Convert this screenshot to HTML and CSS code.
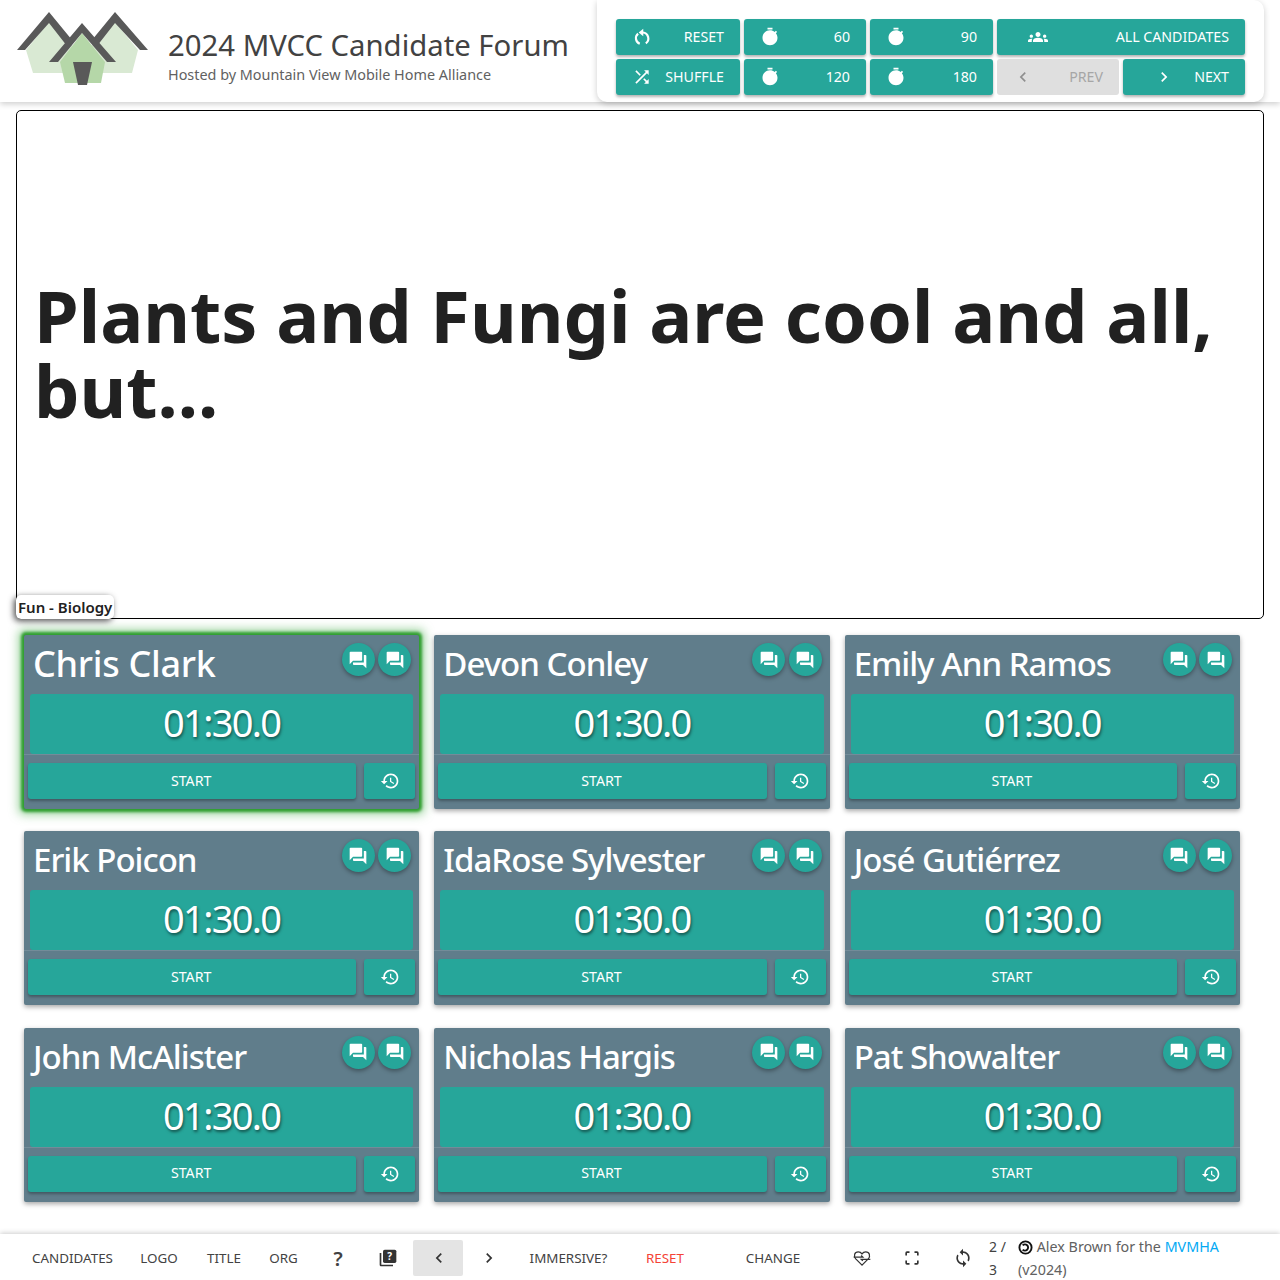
FILE: index.html
```html
<!DOCTYPE html>
<html lang="en">
<head>
  <meta charset="UTF-8" />
  <title>2024 MVCC Candidate Forum</title>
  <link rel="stylesheet" href="styles.css">
</head>
<body>

  <svg class="defs" width="0" height="0">
    <symbol id="i-forum" viewBox="0 0 24 24"><path d="M21 6h-2v9H6v2c0 .55.45 1 1 1h11l4 4V7c0-.55-.45-1-1-1zm-4 6V3c0-.55-.45-1-1-1H3c-.55 0-1 .45-1 1v14l4-4h10c.55 0 1-.45 1-1z"/></symbol>
    <symbol id="i-history" viewBox="0 0 24 24"><path d="M13 3c-4.97 0-9 4.03-9 9H1l3.89 3.89.07.14L9 12H6c0-3.87 3.13-7 7-7s7 3.13 7 7-3.13 7-7 7c-1.93 0-3.68-.79-4.94-2.06l-1.42 1.42C8.27 19.99 10.51 21 13 21c4.97 0 9-4.03 9-9s-4.03-9-9-9zm-1 5v5l4.28 2.54.72-1.21-3.5-2.08V8H12z"/></symbol>
    <symbol id="i-timer" viewBox="0 0 24 24"><path d="M15 1H9v2h6V1zm-4 13h2V8h-2v6zm8.03-6.61l1.42-1.42c-.43-.51-.9-.99-1.41-1.41l-1.42 1.42C16.07 4.74 14.12 4 12 4c-4.97 0-9 4.03-9 9s4.02 9 9 9 9-4.03 9-9c0-2.12-.74-4.07-1.97-5.61z"/></symbol>
    <symbol id="i-shuffle" viewBox="0 0 24 24"><path d="M10.59 9.17L5.41 4 4 5.41l5.17 5.17 1.42-1.41zM14.5 4l2.04 2.04L4 18.59 5.41 20 17.96 7.46 20 9.5V4h-5.5zm.33 9.41l-1.41 1.41 3.13 3.13L14.5 20H20v-5.5l-2.04 2.04-3.13-3.13z"/></symbol>
    <symbol id="i-groups" viewBox="0 0 24 24"><path d="M12 12.75c1.63 0 3.07.39 4.24.9 1.08.48 1.76 1.56 1.76 2.73V18H6v-1.61c0-1.18.68-2.26 1.76-2.73 1.17-.52 2.61-.91 4.24-.91zM4 13c1.1 0 2-.9 2-2s-.9-2-2-2-2 .9-2 2 .9 2 2 2zm1.13 1.1c-.37-.06-.74-.1-1.13-.1-.99 0-1.93.21-2.78.58C.48 14.9 0 15.62 0 16.43V18h4.5v-1.61c0-.83.23-1.61.63-2.29zM20 13c1.1 0 2-.9 2-2s-.9-2-2-2-2 .9-2 2 .9 2 2 2zm4 3.43c0-.81-.48-1.53-1.22-1.85-.85-.37-1.79-.58-2.78-.58-.39 0-.76.04-1.13.1.4.68.63 1.46.63 2.29V18H24v-1.57zM12 6c1.66 0 3 1.34 3 3s-1.34 3-3 3-3-1.34-3-3 1.34-3 3-3z"/></symbol>
    <symbol id="i-reset" viewBox="0 0 24 24"><path class="ring" d="M13 6.600a7.200 7.200 0 0 1 3.600 13M9.300 20.200A7.200 7.200 0 0 1 7.300 8"/><path d="M13.500 2v9L8 6.500z"/></symbol>
    <symbol id="i-prev" viewBox="0 0 24 24"><path d="M15.41 7.41L14 6l-6 6 6 6 1.41-1.41L10.83 12z"/></symbol>
    <symbol id="i-next" viewBox="0 0 24 24"><path d="M10 6L8.59 7.41 13.17 12l-4.58 4.58L10 18l6-6z"/></symbol>
    <symbol id="i-sync" viewBox="0 0 24 24"><path d="M12 4V1L8 5l4 4V6c3.31 0 6 2.69 6 6 0 1.01-.25 1.97-.7 2.8l1.46 1.46C19.54 15.03 20 13.57 20 12c0-4.42-3.58-8-8-8zm0 14c-3.31 0-6-2.69-6-6 0-1.01.25-1.97.7-2.8L5.24 7.74C4.46 8.97 4 10.43 4 12c0 4.42 3.58 8 8 8v3l4-4-4-4v3z"/></symbol>
  </svg>

  <header class="topbar">
    <div class="brand">
      <svg class="logo" viewBox="16 10 134 76">
        <polygon class="house-light" points="49,22 26,50 33,73 132,73 138,50 115,22 82,55"/>
        <polygon class="house-mid" points="82,33 60,62 65,83 101,83 105,62"/>
        <polygon class="roof" points="49,12 72,40 67,46 49,23 25,50 17,50"/>
        <polygon class="roof" points="115,12 148,50 140,50 115,23 97,46 92,40"/>
        <polygon class="roof" points="82,23 116,62 107,62 82,33 58,62 49,62"/>
        <polygon class="roof" points="73,62 92,62 87,85 78,85"/>
      </svg>
      <div class="brand-text">
        <div class="brand-title">2024 MVCC Candidate Forum</div>
        <div class="brand-sub">Hosted by Mountain View Mobile Home Alliance</div>
      </div>
    </div>

    <div class="controls">
      <button class="btn"><svg class="ico"><use href="#i-reset"/></svg>Reset</button>
      <button class="btn"><svg class="ico"><use href="#i-timer"/></svg>60</button>
      <button class="btn"><svg class="ico"><use href="#i-timer"/></svg>90</button>
      <button class="btn wide shift"><svg class="ico"><use href="#i-groups"/></svg>All Candidates</button>
      <button class="btn"><svg class="ico"><use href="#i-shuffle"/></svg>Shuffle</button>
      <button class="btn"><svg class="ico"><use href="#i-timer"/></svg>120</button>
      <button class="btn"><svg class="ico"><use href="#i-timer"/></svg>180</button>
      <button class="btn disabled"><svg class="ico"><use href="#i-prev"/></svg>Prev</button>
      <button class="btn shift"><svg class="ico"><use href="#i-next"/></svg>Next</button>
    </div>
  </header>

  <section class="question">
    <h1>Plants and Fungi are cool and all, but...</h1>
    <span class="tag">Fun - Biology</span>
  </section>

  <main class="cards">
    <div class="card active">
      <div class="card-head"><span class="name">Chris Clark</span><span class="round"><svg class="ico"><use href="#i-forum"/></svg></span><span class="round"><svg class="ico"><use href="#i-forum"/></svg></span></div>
      <div class="clock">01:30.0</div>
      <div class="actions"><button class="btn start">Start</button><button class="btn back"><svg class="ico"><use href="#i-history"/></svg></button></div>
    </div>
    <div class="card">
      <div class="card-head"><span class="name">Devon Conley</span><span class="round"><svg class="ico"><use href="#i-forum"/></svg></span><span class="round"><svg class="ico"><use href="#i-forum"/></svg></span></div>
      <div class="clock">01:30.0</div>
      <div class="actions"><button class="btn start">Start</button><button class="btn back"><svg class="ico"><use href="#i-history"/></svg></button></div>
    </div>
    <div class="card">
      <div class="card-head"><span class="name">Emily Ann Ramos</span><span class="round"><svg class="ico"><use href="#i-forum"/></svg></span><span class="round"><svg class="ico"><use href="#i-forum"/></svg></span></div>
      <div class="clock">01:30.0</div>
      <div class="actions"><button class="btn start">Start</button><button class="btn back"><svg class="ico"><use href="#i-history"/></svg></button></div>
    </div>
    <div class="card">
      <div class="card-head"><span class="name">Erik Poicon</span><span class="round"><svg class="ico"><use href="#i-forum"/></svg></span><span class="round"><svg class="ico"><use href="#i-forum"/></svg></span></div>
      <div class="clock">01:30.0</div>
      <div class="actions"><button class="btn start">Start</button><button class="btn back"><svg class="ico"><use href="#i-history"/></svg></button></div>
    </div>
    <div class="card">
      <div class="card-head"><span class="name">IdaRose Sylvester</span><span class="round"><svg class="ico"><use href="#i-forum"/></svg></span><span class="round"><svg class="ico"><use href="#i-forum"/></svg></span></div>
      <div class="clock">01:30.0</div>
      <div class="actions"><button class="btn start">Start</button><button class="btn back"><svg class="ico"><use href="#i-history"/></svg></button></div>
    </div>
    <div class="card">
      <div class="card-head"><span class="name">José Gutiérrez</span><span class="round"><svg class="ico"><use href="#i-forum"/></svg></span><span class="round"><svg class="ico"><use href="#i-forum"/></svg></span></div>
      <div class="clock">01:30.0</div>
      <div class="actions"><button class="btn start">Start</button><button class="btn back"><svg class="ico"><use href="#i-history"/></svg></button></div>
    </div>
    <div class="card">
      <div class="card-head"><span class="name">John McAlister</span><span class="round"><svg class="ico"><use href="#i-forum"/></svg></span><span class="round"><svg class="ico"><use href="#i-forum"/></svg></span></div>
      <div class="clock">01:30.0</div>
      <div class="actions"><button class="btn start">Start</button><button class="btn back"><svg class="ico"><use href="#i-history"/></svg></button></div>
    </div>
    <div class="card">
      <div class="card-head"><span class="name">Nicholas Hargis</span><span class="round"><svg class="ico"><use href="#i-forum"/></svg></span><span class="round"><svg class="ico"><use href="#i-forum"/></svg></span></div>
      <div class="clock">01:30.0</div>
      <div class="actions"><button class="btn start">Start</button><button class="btn back"><svg class="ico"><use href="#i-history"/></svg></button></div>
    </div>
    <div class="card">
      <div class="card-head"><span class="name">Pat Showalter</span><span class="round"><svg class="ico"><use href="#i-forum"/></svg></span><span class="round"><svg class="ico"><use href="#i-forum"/></svg></span></div>
      <div class="clock">01:30.0</div>
      <div class="actions"><button class="btn start">Start</button><button class="btn back"><svg class="ico"><use href="#i-history"/></svg></button></div>
    </div>
  </main>

  <footer class="bottombar">
    <button class="link candidates">Candidates</button>
    <button class="link logo-btn">Logo</button>
    <button class="link title-btn">Title</button>
    <button class="link org-btn">Org</button>
    <button class="link icon-btn help">?</button>
    <button class="link icon-btn">
      <svg class="ico dark" viewBox="0 0 24 24"><path d="M4 6H2v14c0 1.1.9 2 2 2h14v-2H4V6z"/><rect x="6" y="2" width="16" height="16" rx="2"/><text x="14" y="14.5" class="book-q">?</text></svg>
    </button>
    <button class="link icon-btn current"><svg class="ico dark nudge"><use href="#i-prev"/></svg></button>
    <button class="link icon-btn"><svg class="ico dark nudge"><use href="#i-next"/></svg></button>
    <button class="link immersive">Immersive?</button>
    <button class="link reset">Reset</button>
    <button class="link change">Change</button>
    <button class="link icon-btn">
      <svg class="ico line" viewBox="0 0 24 24"><path d="M12 20.5 4.5 13C1.5 9.5 3 4.5 7.5 4.5c2 0 3.500 1 4.500 2.500 1-1.500 2.500-2.500 4.500-2.500 4.500 0 6 5 3 8.500z"/><path d="M2 11h11l-2-2M22 13.500H11l2 2"/></svg>
    </button>
    <button class="link icon-btn">
      <svg class="ico line thick" viewBox="0 0 24 24"><path d="M5 9V6a1 1 0 0 1 1-1h3M15 5h3a1 1 0 0 1 1 1v3M19 15v3a1 1 0 0 1-1 1h-3M9 19H6a1 1 0 0 1-1-1v-3"/></svg>
    </button>
    <button class="link icon-btn"><svg class="ico dark nudge"><use href="#i-sync"/></svg></button>
    <div class="pager">2 / 3</div>
    <div class="credit">
      <svg class="copyleft" viewBox="0 0 16 16"><circle cx="8" cy="8" r="6.500"/><path d="M5 5.800a3.300 3.300 0 1 1 0 4.400"/></svg>
      Alex Brown for the <a href="#">MVMHA</a> (v2024)
    </div>
  </footer>

</body>
</html>
```

FILE: styles.css
```css
* {
  box-sizing: border-box;
}

body {
  margin: 0;
  height: 100vh;
  display: flex;
  flex-direction: column;
  overflow: hidden;
  font-family: "Noto Sans", "Open Sans", sans-serif;
  background: white;
  color: #424242;
}

.defs {
  position: absolute;
}

.ico {
  width: 20px;
  height: 20px;
  fill: white;
  flex: none;
}

.ring {
  fill: none;
  stroke: white;
  stroke-width: 2.6;
}

/* top bar */
.topbar {
  height: 102px;
  flex: none;
  display: flex;
  justify-content: space-between;
  background: white;
  box-shadow: 0 2px 6px rgba(0, 0, 0, 0.2);
}

.brand {
  display: flex;
  align-items: center;
  padding-left: 16px;
}

.logo {
  width: 134px;
  height: 76px;
  margin-top: -6px;
}

.house-light { fill: #d9e9d3; }
.house-mid { fill: #b5d7a8; }
.roof { fill: #595959; }

.brand-text {
  margin-left: 18px;
  margin-top: 11px;
}

.brand-title {
  font-size: 29.3px;
  line-height: 36px;
  color: #424242;
}

.brand-sub {
  font-size: 14.4px;
  line-height: 24px;
  color: #616161;
}

.controls {
  width: 667px;
  margin-right: 16px;
  padding: 19px 19px 7px;
  display: grid;
  grid-template-columns: 124px 122px 123px 122px 122px;
  grid-template-rows: 36px 36px;
  gap: 4px;
  background: white;
  border-radius: 0 10px 10px 10px;
  box-shadow: 0 2px 6px rgba(0, 0, 0, 0.2);
}

.btn {
  display: flex;
  align-items: center;
  justify-content: space-between;
  padding: 0 16px 2px;
  border: none;
  border-radius: 3px;
  background: #26a69a;
  color: white;
  font-family: inherit;
  font-size: 14.2px;
  text-transform: uppercase;
  box-shadow: 0 2px 3px rgba(0, 0, 0, 0.3);
}

.btn .ico {
  margin-top: 2px;
}

.btn.wide {
  grid-column: span 2;
}

.btn.shift .ico {
  margin-left: 15px;
}

.btn.disabled {
  background: #dfdfdf;
  color: #a6a6a6;
  box-shadow: none;
}

.btn.disabled .ico {
  fill: #8f8f8f;
}

/* question */
.question {
  position: relative;
  height: 509px;
  flex: none;
  margin: 8px 16px 0;
  padding: 0 17px;
  display: flex;
  align-items: center;
  border: 1px solid black;
  border-radius: 5px;
}

.question h1 {
  margin: 0 0 24px;
  font-size: 72px;
  line-height: 75px;
  font-weight: 700;
  color: #212121;
}

.tag {
  position: absolute;
  left: -1px;
  bottom: -1px;
  padding: 2px;
  background: white;
  border-radius: 5px;
  font-size: 15px;
  font-weight: 600;
  line-height: 20px;
  color: #212121;
  box-shadow: -2px 2px 6px rgba(0, 0, 0, 0.7);
}

/* candidate cards */
.cards {
  margin-top: 16px;
  padding: 0 40px 0 24px;
  display: grid;
  grid-template-columns: repeat(3, 1fr);
  column-gap: 15px;
  row-gap: 22.4px;
}

.card {
  height: 174px;
  background: #607d8b;
  border-radius: 2px;
  box-shadow: 0 2px 5px rgba(0, 0, 0, 0.35);
}

.card.active {
  box-shadow: 0 0 3px 3px #2f9e2f, 0 0 10px 6px rgba(76, 175, 80, 0.5);
}

.card-head {
  height: 59px;
  padding: 8px 8px 0 9px;
  display: flex;
  gap: 3.5px;
}

.name {
  flex: 1;
  margin-top: -1px;
  font-size: 33px;
  line-height: 44px;
  font-weight: 500;
  letter-spacing: -1px;
  color: white;
  white-space: nowrap;
}

.active .name {
  font-size: 36px;
  letter-spacing: -0.3px;
}

.round {
  width: 33px;
  height: 33px;
  display: flex;
  align-items: center;
  justify-content: center;
  background: #26a69a;
  border-radius: 50%;
  box-shadow: 0 2px 4px rgba(0, 0, 0, 0.35);
}

.clock {
  height: 60px;
  margin: 0 6px;
  background: #26a69a;
  border-radius: 3px;
  text-align: center;
  font-size: 38px;
  line-height: 57px;
  letter-spacing: -1.7px;
  color: white;
  text-shadow: 1px 2px 3px rgba(0, 0, 0, 0.5);
}

.actions {
  padding: 8px 4px 0;
  display: flex;
  gap: 8px;
  border-top: 1px solid rgba(255, 255, 255, 0.12);
}

.actions .btn {
  height: 36px;
  justify-content: center;
}

.btn.start {
  flex: 1;
  padding-right: 18px;
}

.btn.back {
  width: 51px;
  padding: 0 0 2px;
}

/* bottom bar */
.bottombar {
  height: 46px;
  margin-top: auto;
  flex: none;
  padding: 2px 0 0 18px;
  display: flex;
  align-items: center;
  background: white;
  box-shadow: 0 -1px 5px rgba(0, 0, 0, 0.2);
}

.link {
  height: 36px;
  padding: 0;
  border: none;
  border-radius: 2px;
  background: transparent;
  color: #424242;
  font-family: inherit;
  font-size: 13.4px;
  text-transform: uppercase;
  flex: none;
}

.icon-btn {
  width: 50px;
  display: flex;
  align-items: center;
  justify-content: center;
}

.icon-btn.help {
  font-size: 20px;
  font-weight: 600;
}

.icon-btn.current {
  background: #e4e4e4;
}

.ico.dark {
  fill: #333;
}

.ico.nudge {
  margin-left: 2px;
}

.ico.line {
  fill: none;
  stroke: #333;
  stroke-width: 1.500;
}

.ico.thick {
  stroke-width: 2;
}

.book-q {
  fill: white;
  font-size: 12px;
  font-weight: 700;
  text-anchor: middle;
}

.candidates { width: 109px; }
.logo-btn { width: 64px; }
.title-btn { width: 60px; margin-left: 3px; }
.org-btn { width: 57px; margin-left: 1px; }
.help { margin-left: 1px; }
.immersive { width: 107px; margin-left: 2px; }
.reset { width: 86px; color: #f44336; }
.change { width: 128px; margin-left: 1px; }

.pager {
  width: 20px;
  margin-left: 2px;
  font-size: 14px;
  line-height: 23px;
  color: #424242;
}

.credit {
  width: 225px;
  margin-left: 9px;
  font-size: 14.3px;
  line-height: 23px;
  color: #616161;
}

.credit a {
  color: #03a9f4;
  text-decoration: none;
}

.copyleft {
  width: 15px;
  height: 15px;
  vertical-align: -3px;
  fill: none;
  stroke: #111;
  stroke-width: 2;
}
```
